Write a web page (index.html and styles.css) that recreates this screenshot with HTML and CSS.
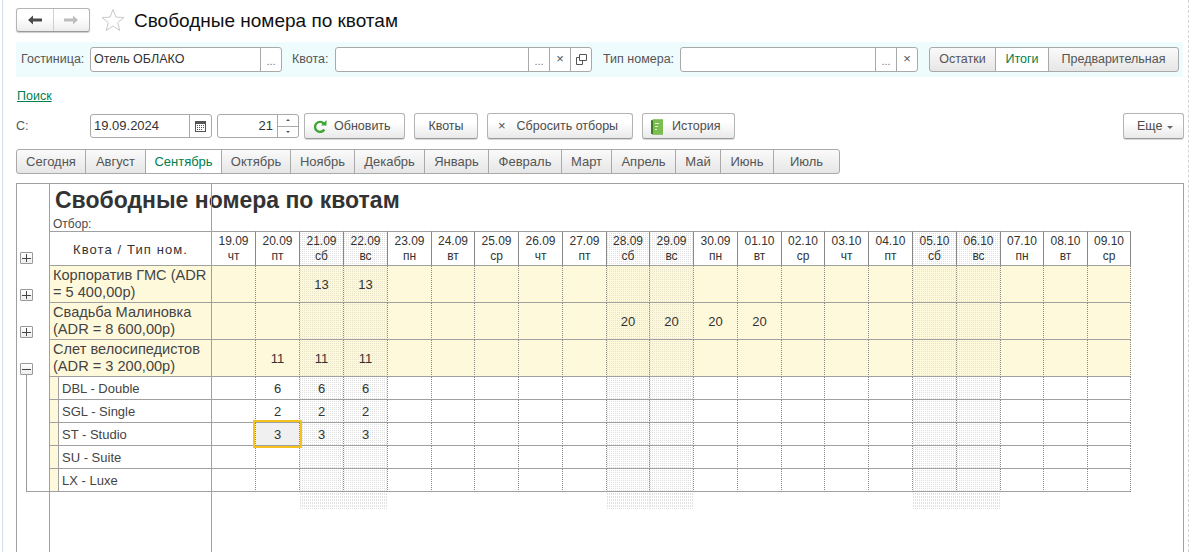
FILE: index.html
```html
<!DOCTYPE html>
<html lang="ru">
<head>
<meta charset="utf-8">
<title>Свободные номера по квотам</title>
<link rel="stylesheet" href="styles.css">
</head>
<body>
<div class="page">
  <header class="head">
    <div class="nav">
      <button class="nav-btn"><svg width="16" height="12" viewBox="0 0 16 12"><path d="M1 6 6 1.500V4.500H15V7.500H6V10.500Z" fill="#4a4a4a"/></svg></button>
      <button class="nav-btn"><svg width="16" height="12" viewBox="0 0 16 12"><path d="M15 6 10 1.500V4.500H1V7.500H10V10.500Z" fill="#bdbdbd"/></svg></button>
    </div>
    <svg class="star" width="24" height="24" viewBox="0 0 24 24"><path d="M12 1.500 14.900 9.100 23 9.500 16.700 14.600 18.800 22.500 12 18 5.200 22.500 7.300 14.600 1 9.500 9.100 9.100Z" fill="#fff" stroke="#c9c9c9"/></svg>
    <h1 class="title">Свободные номера по квотам</h1>
  </header>

  <section class="band">
    <span class="label l-hotel">Гостиница:</span>
    <div class="field f-hotel"><span class="value">Отель ОБЛАКО</span><span class="cell-btn dots">...</span></div>
    <span class="label l-quota">Квота:</span>
    <div class="field f-quota"><span class="value"></span><span class="cell-btn dots">...</span><span class="cell-btn x">×</span><span class="cell-btn"><svg width="11" height="11" viewBox="0 0 11 11"><path d="M3.500 .5H10.500V6.500H3.500ZM3.500 3.500H.5V10.500H6.500V6.500" fill="none" stroke="#555"/></svg></span></div>
    <span class="label l-type">Тип номера:</span>
    <div class="field f-type"><span class="value"></span><span class="cell-btn dots">...</span><span class="cell-btn x">×</span></div>
    <div class="seg seg-mode"><span class="seg-item m1">Остатки</span><span class="seg-item m2 on">Итоги</span><span class="seg-item m3">Предварительная</span></div>
  </section>

  <a class="search" href="#">Поиск</a>

  <section class="tools">
    <span class="label l-from">С:</span>
    <div class="field f-date"><span class="value">19.09.2024</span><span class="cell-btn cal"><svg width="11" height="12" viewBox="0 0 11 12"><path d="M0 1H11V12H0Z" fill="#555"/><path d="M1 4H10V11H1Z" fill="#fff"/><path d="M2 5H3V6H2ZM4 5H5V6H4ZM6 5H7V6H6ZM8 5H9V6H8ZM2 7H3V8H2ZM4 7H5V8H4ZM6 7H7V8H6ZM8 7H9V8H8ZM2 9H3V10H2ZM4 9H5V10H4ZM6 9H7V10H6Z" fill="#555"/></svg></span></div>
    <div class="field f-num"><span class="value num">21</span><span class="spin"><span class="spin-up"></span><span class="spin-down"></span></span></div>
    <button class="btn b-refresh"><svg width="14" height="14" viewBox="0 0 14 14"><path d="M11.300 9.500A5 5 0 1 1 10.800 3.600" fill="none" stroke="#3fa535" stroke-width="2.400"/><path d="M8 5.500H13.500V0Z" fill="#3fa535"/></svg><span>Обновить</span></button>
    <button class="btn b-quotas"><span>Квоты</span></button>
    <button class="btn b-reset"><i class="bx">×</i><span>Сбросить отборы</span></button>
    <button class="btn b-hist"><svg width="14" height="16" viewBox="0 0 14 16"><path d="M1 1.500 3 .5H13V15.500H3L1 14.500Z" fill="#5fa53c"/><path d="M3 .5H13V15.500H3Z" fill="#7cbd4f"/><path d="M1 1.500H3V15.500L1 14.500Z" fill="#3e7d28"/><path d="M5 4H9V5H5ZM5 7H8V8H5ZM5 10H7V11H5Z" fill="#e4f3d4"/></svg><span>История</span></button>
    <button class="btn b-more"><span>Еще</span><i class="caret"></i></button>
  </section>

  <nav class="seg months">
    <span class="seg-item t1">Сегодня</span><span class="seg-item t2">Август</span><span class="seg-item t3 on">Сентябрь</span><span class="seg-item t4">Октябрь</span><span class="seg-item t5">Ноябрь</span><span class="seg-item t6">Декабрь</span><span class="seg-item t7">Январь</span><span class="seg-item t8">Февраль</span><span class="seg-item t9">Март</span><span class="seg-item t10">Апрель</span><span class="seg-item t11">Май</span><span class="seg-item t12">Июнь</span><span class="seg-item t13">Июль</span>
  </nav>

  <main class="sheet">
    <div class="report-head">
      <div class="report-title">Свободные номера по квотам</div>
      <div class="report-filter">Отбор:</div>
    </div>
    <table class="grid">
      <colgroup>
        <col class="c-gutter"><col class="c-label">
        <col class="c44"><col class="c44"><col class="c44"><col class="c44"><col class="c44"><col class="c43"><col class="c44"><col class="c44"><col class="c44"><col class="c43"><col class="c44"><col class="c44"><col class="c44"><col class="c43"><col class="c44"><col class="c44"><col class="c44"><col class="c44"><col class="c43"><col class="c44"><col class="c43">
      </colgroup>
      <tr class="r-head">
        <td class="gut"><i class="tog plus"></i></td><th class="lab-head">Квота / Тип ном.</th>
        <th>19.09<br>чт</th><th>20.09<br>пт</th><th>21.09<br>сб</th><th>22.09<br>вс</th><th>23.09<br>пн</th><th>24.09<br>вт</th><th>25.09<br>ср</th><th>26.09<br>чт</th><th>27.09<br>пт</th><th>28.09<br>сб</th><th>29.09<br>вс</th><th>30.09<br>пн</th><th>01.10<br>вт</th><th>02.10<br>ср</th><th>03.10<br>чт</th><th>04.10<br>пт</th><th>05.10<br>сб</th><th>06.10<br>вс</th><th>07.10<br>пн</th><th>08.10<br>вт</th><th>09.10<br>ср</th>
      </tr>
      <tr class="r-quota">
        <td class="gut"><i class="tog plus"></i></td><td class="lab">Корпоратив ГМС (ADR = 5 400,00р)</td>
        <td></td><td></td><td>13</td><td>13</td><td></td><td></td><td></td><td></td><td></td><td></td><td></td><td></td><td></td><td></td><td></td><td></td><td></td><td></td><td></td><td></td><td></td>
      </tr>
      <tr class="r-quota">
        <td class="gut"><i class="tog plus"></i></td><td class="lab">Свадьба Малиновка (ADR = 8 600,00р)</td>
        <td></td><td></td><td></td><td></td><td></td><td></td><td></td><td></td><td></td><td>20</td><td>20</td><td>20</td><td>20</td><td></td><td></td><td></td><td></td><td></td><td></td><td></td><td></td>
      </tr>
      <tr class="r-quota">
        <td class="gut open"><i class="tog minus"></i></td><td class="lab">Слет велосипедистов (ADR = 3 200,00р)</td>
        <td></td><td>11</td><td>11</td><td>11</td><td></td><td></td><td></td><td></td><td></td><td></td><td></td><td></td><td></td><td></td><td></td><td></td><td></td><td></td><td></td><td></td><td></td>
      </tr>
      <tr class="r-sub">
        <td class="gut tree"></td><td class="lab"><div class="sub">DBL - Double</div></td>
        <td></td><td>6</td><td>6</td><td>6</td><td></td><td></td><td></td><td></td><td></td><td></td><td></td><td></td><td></td><td></td><td></td><td></td><td></td><td></td><td></td><td></td><td></td>
      </tr>
      <tr class="r-sub">
        <td class="gut tree"></td><td class="lab"><div class="sub">SGL - Single</div></td>
        <td></td><td>2</td><td>2</td><td>2</td><td></td><td></td><td></td><td></td><td></td><td></td><td></td><td></td><td></td><td></td><td></td><td></td><td></td><td></td><td></td><td></td><td></td>
      </tr>
      <tr class="r-sub">
        <td class="gut tree"></td><td class="lab"><div class="sub">ST - Studio</div></td>
        <td></td><td class="current">3</td><td>3</td><td>3</td><td></td><td></td><td></td><td></td><td></td><td></td><td></td><td></td><td></td><td></td><td></td><td></td><td></td><td></td><td></td><td></td><td></td>
      </tr>
      <tr class="r-sub">
        <td class="gut tree"></td><td class="lab"><div class="sub">SU - Suite</div></td>
        <td></td><td></td><td></td><td></td><td></td><td></td><td></td><td></td><td></td><td></td><td></td><td></td><td></td><td></td><td></td><td></td><td></td><td></td><td></td><td></td><td></td>
      </tr>
      <tr class="r-sub">
        <td class="gut tree end"></td><td class="lab"><div class="sub">LX - Luxe</div></td>
        <td></td><td></td><td></td><td></td><td></td><td></td><td></td><td></td><td></td><td></td><td></td><td></td><td></td><td></td><td></td><td></td><td></td><td></td><td></td><td></td><td></td>
      </tr>
      <tr class="r-tail">
        <td class="gut"></td><td></td>
        <td></td><td></td><td></td><td></td><td></td><td></td><td></td><td></td><td></td><td></td><td></td><td></td><td></td><td></td><td></td><td></td><td></td><td></td><td></td><td></td><td></td>
      </tr>
    </table>
  </main>
</div>
</body>
</html>
```

FILE: styles.css
```css
* { box-sizing: border-box; }
html, body { margin: 0; height: 100%; overflow: hidden; background: #fff; }
body { font: 12.500px/15px "Liberation Sans", Arial, sans-serif; color: #4a4a4a; }
button { font: inherit; color: inherit; padding: 0; }

.page {
  margin-left: 2px;
  width: 1187px;
  height: 552px;
  padding: 8px 4px 0 13px;
  border-left: 1px solid #d3deee;
  border-right: 1px dashed #d4d4d4;
  overflow: hidden;
}

/* header */
.head { display: flex; align-items: center; height: 24px; }
.nav {
  display: flex; width: 74px; height: 24px;
  border: 1px solid #b4b4b4; border-bottom-color: #9a9a9a; border-radius: 3px;
  background: linear-gradient(#fff 40%, #ececec);
  box-shadow: 0 1px 1px #ccc;
}
.nav-btn { flex: 1; border: 0; background: none; display: flex; align-items: center; justify-content: center; }
.nav-btn + .nav-btn { border-left: 1px solid #d0d0d0; }
.star { margin-left: 11px; }
.title { margin: 2px 0 0 9px; font-size: 19px; line-height: 24px; font-weight: 400; color: #111; }

/* filter band */
.band {
  display: flex; align-items: center;
  margin-top: 10px; width: 1167px; height: 35px;
  padding-left: 5px;
  background: #effcfd;
}
.label { color: #555; }
.l-hotel { width: 69px; }
.l-quota { margin-left: 10px; width: 43px; }
.l-type { margin-left: 11px; width: 77px; }
.field {
  display: flex; height: 25px;
  border: 1px solid #a9a9a9; border-radius: 3px; background: #fff;
  color: #333;
}
.f-hotel { width: 192px; }
.f-quota { width: 257px; }
.f-type { width: 238px; }
.value { flex: 1; padding: 0 3px; line-height: 23px; white-space: nowrap; }
.cell-btn {
  width: 21px; border-left: 1px solid #a9a9a9;
  display: flex; align-items: center; justify-content: center;
  color: #777; font-size: 12px;
}
.cell-btn.dots { padding-top: 4px; font-size: 11px; }
.cell-btn.x { font-size: 13px; color: #555; padding-bottom: 3px; }

/* segmented */
.seg {
  display: flex; border: 1px solid #a9a9a9; border-radius: 3px;
  background: linear-gradient(#fafafa, #e6e6e6);
  height: 25px;
}
.seg-item {
  display: flex; align-items: center; justify-content: center;
  border-right: 1px solid #a9a9a9; color: #555;
  flex: none;
}
.seg-item:last-child { border-right: 0; }
.seg-item.on { background: #fff; color: #00804f; }
.seg-mode { margin-left: 11px; width: 250px; }
.m1 { width: 66px; } .m2 { width: 53px; } .m3 { width: 129px; }

/* search */
.search { display: block; margin: 12px 0 0 1px; width: max-content; line-height: 15px; color: #00804f; }

/* toolbar */
.tools { display: flex; align-items: center; height: 26px; margin-top: 9px; }
.l-from { width: 74px; }
.f-date { width: 122px; height: 24px; }
.f-date .value, .f-num .value { line-height: 22px; font-size: 13px; }
.cal { width: 22px; }
.f-num { width: 82px; height: 24px; margin-left: 5px; }
.num { text-align: right; padding-right: 4px; }
.spin { width: 21px; border-left: 1px solid #a9a9a9; display: flex; flex-direction: column; }
.spin-up, .spin-down { flex: 1; display: flex; align-items: center; justify-content: center; }
.spin-up { border-bottom: 1px solid #a9a9a9; }
.spin-up::before { content: ""; border: 2px solid transparent; border-top: 0; border-bottom: 2px solid #555; }
.spin-down::before { content: ""; border: 2px solid transparent; border-bottom: 0; border-top: 2px solid #555; }
.btn {
  display: flex; align-items: center; justify-content: center; flex: none;
  height: 26px; border: 1px solid #b4b4b4; border-bottom-color: #9a9a9a; border-radius: 3px;
  background: linear-gradient(#fff 35%, #e9e9e9);
  box-shadow: 0 1px 0 #d8d8d8;
  color: #4d4d4d;
  padding-top: 1px;
}
.b-refresh { width: 101px; margin-left: 5px; gap: 7px; justify-content: flex-start; padding-left: 8px; }
.b-quotas { width: 64px; margin-left: 9px; }
.b-reset { width: 146px; margin-left: 9px; gap: 11px; justify-content: flex-start; padding-left: 10px; }
.b-hist { width: 93px; margin-left: 9px; gap: 8px; justify-content: flex-start; padding-left: 7px; }
.b-more { width: 61px; margin-left: auto; gap: 5px; justify-content: flex-start; padding-left: 13px; }
.bx { font-style: normal; font-size: 13px; padding-bottom: 3px; }
.caret { border: 3px solid transparent; border-bottom: 0; border-top: 3px solid #666; margin-top: 1px; }

/* months */
.months { margin-top: 10px; width: 824px; font-size: 13px; }
.t1 { width: 69px; } .t2 { width: 60px; } .t3 { width: 76px; } .t4 { width: 69px; }
.t5 { width: 64px; } .t6 { width: 70px; } .t7 { width: 64px; } .t8 { width: 73px; }
.t9 { width: 50px; } .t10 { width: 64px; } .t11 { width: 45px; } .t12 { width: 53px; } .t13 { width: 65px; }

/* report sheet */
.sheet {
  position: relative;
  margin-top: 9px; width: 1168px; height: 400px;
  border: 1px solid #a0a0a0; border-bottom: 0;
  overflow: hidden;
}
.sheet::before, .sheet::after {
  content: ""; position: absolute; top: 0; bottom: 0; width: 1px; background: #a0a0a0;
}
.sheet::before { left: 32px; }
.sheet::after { left: 194px; }

.report-head { height: 47px; padding-left: 38px; }
.report-title { padding-top: 4px; font-size: 23px; line-height: 25px; font-weight: 700; color: #333; white-space: nowrap; }
.report-filter { margin: 4px 0 0 -2px; font-size: 12px; line-height: 15px; }

.grid { table-layout: fixed; width: 1114px; border-collapse: separate; border-spacing: 0; color: #333; font-size: 13px; }
.c-gutter { width: 33px; } .c-label { width: 162px; }
.c44 { width: 44px; } .c43 { width: 43px; }
.grid td, .grid th {
  padding: 0; text-align: center; font-weight: 400;
  border-right: 1px dotted #888; border-bottom: 1px solid #a0a0a0;
  overflow: visible;
}
.grid td.gut { border: 0; text-align: left; vertical-align: bottom; padding: 0 0 2px 3px; }
.grid td.lab, .grid th.lab-head { border-right: 1px solid #a0a0a0; text-align: left; }

.tog {
  display: block; width: 13px; height: 12px;
  border: 1px solid #999; border-radius: 1px;
  background:
    linear-gradient(#444, #444) center / 9px 1px no-repeat,
    linear-gradient(#fff, #eee);
}
.tog.plus {
  background:
    linear-gradient(#444, #444) center / 9px 1px no-repeat,
    linear-gradient(#444, #444) center / 1px 8px no-repeat,
    linear-gradient(#fff, #eee);
}

.r-head th { height: 35px; line-height: 15px; font-size: 12px; border-right-style: solid; border-top: 1px solid #a0a0a0; }
.r-head td.gut { height: 35px; }
.grid th.lab-head { text-align: center; font-size: 13px; letter-spacing: 1.100px; padding-top: 1px; }

.r-quota td { height: 37px; background-color: #fff9dc; padding-top: 1px; }
.r-quota td.lab { padding: 0 2px 0 3px; font-size: 14.600px; line-height: 17px; color: #444; }
.r-quota td.gut { background: none; }
.open { background: linear-gradient(#999, #999) 9px 100% / 1px 3px no-repeat !important; }

.r-sub td { height: 23px; background-color: #fff; padding-top: 1px; }
.grid .r-sub td.lab { background: #fff9dc; padding: 0; }
.grid .r-sub td.gut { padding: 0; }
.sub {
  margin-left: 8px; height: 22px; padding-left: 3px;
  border-left: 1px solid #a0a0a0; background: #fff;
  line-height: 23px; color: #444;
}
.tree { background: linear-gradient(#999, #999) 9px 0 / 1px 100% no-repeat !important; }
.tree.end {
  background:
    linear-gradient(#999, #999) 9px 0 / 1px 100% no-repeat,
    linear-gradient(#a0a0a0, #a0a0a0) 9px 100% / 100% 1px no-repeat !important;
}

.r-tail td { height: 17px; border: 0 !important; background: none; }

/* weekend hatching */
tr > :nth-child(5), tr > :nth-child(6),
tr > :nth-child(12), tr > :nth-child(13),
tr > :nth-child(19), tr > :nth-child(20) {
  background-image:
    linear-gradient(#fff 50%, transparent 50%),
    linear-gradient(90deg, #dedede 50%, #fff 50%);
  background-size: 2px 2px;
}
.r-quota > :nth-child(5), .r-quota > :nth-child(6),
.r-quota > :nth-child(12), .r-quota > :nth-child(13),
.r-quota > :nth-child(19), .r-quota > :nth-child(20) {
  background-image:
    linear-gradient(#fff9dc 50%, transparent 50%),
    linear-gradient(90deg, #e6e3ca 50%, #fff9dc 50%);
}
.r-tail > :nth-child(5), .r-tail > :nth-child(6),
.r-tail > :nth-child(12), .r-tail > :nth-child(13),
.r-tail > :nth-child(19), .r-tail > :nth-child(20) {
  background-image:
    linear-gradient(#fff 34%, transparent 34%),
    linear-gradient(90deg, #e2e2e2 50%, #fff 50%);
  background-size: 2px 3px;
}

/* current cell */
.grid td.current { position: relative; background: #f0f0f0; }
.current::after {
  content: ""; position: absolute; inset: -3px -3px -3px -3px;
  border: 2px solid #f6c21c;
}
```
